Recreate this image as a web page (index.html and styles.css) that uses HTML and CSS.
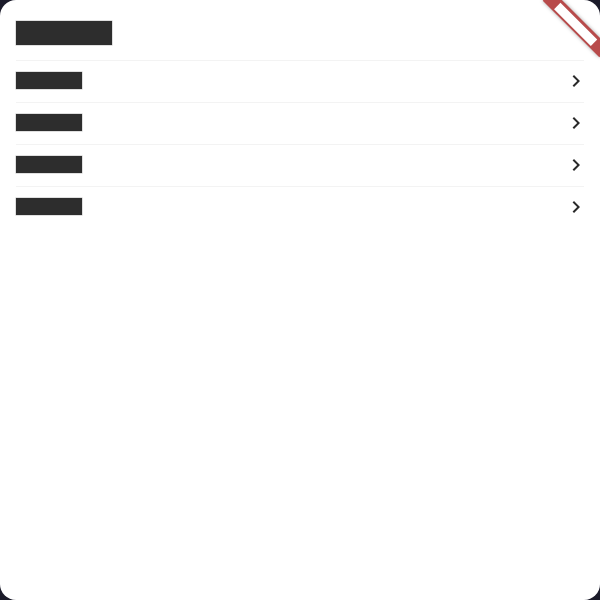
FILE: index.html
```html
<!DOCTYPE html>
<html lang="zh">
<head>
<meta charset="utf-8">
<title>设置</title>
<link rel="stylesheet" href="styles.css">
</head>
<body>
<div class="app">
  <div class="content">
    <h1 class="title"><span class="tofu tofu-title">设置中心</span></h1>
    <ul class="list">
      <li class="row"><span class="tofu tofu-row">个人信息</span><svg class="chev" viewBox="0 0 24 24" width="24" height="24"><path d="M10 6L8.59 7.41 13.17 12l-4.58 4.59L10 18l6-6z"/></svg></li>
      <li class="row"><span class="tofu tofu-row">账号安全</span><svg class="chev" viewBox="0 0 24 24" width="24" height="24"><path d="M10 6L8.59 7.41 13.17 12l-4.58 4.59L10 18l6-6z"/></svg></li>
      <li class="row"><span class="tofu tofu-row">消息通知</span><svg class="chev" viewBox="0 0 24 24" width="24" height="24"><path d="M10 6L8.59 7.41 13.17 12l-4.58 4.59L10 18l6-6z"/></svg></li>
      <li class="row"><span class="tofu tofu-row">关于我们</span><svg class="chev" viewBox="0 0 24 24" width="24" height="24"><path d="M10 6L8.59 7.41 13.17 12l-4.58 4.59L10 18l6-6z"/></svg></li>
    </ul>
  </div>
  <div class="banner"><span class="banner-text">DEBUG</span></div>
</div>
</body>
</html>
```

FILE: styles.css
```css
html, body {
  margin: 0;
  padding: 0;
}
body {
  background: #1b1b2a;
  font-family: "Noto Sans CJK SC", "Noto Sans", sans-serif;
}
.app {
  position: relative;
  width: 600px;
  height: 600px;
  background: #ffffff;
  border-radius: 16px;
  overflow: hidden;
}
.content {
  padding: 21px 16px 0;
}
.title {
  margin: 0 0 15px;
  height: 24px;
  display: flex;
  font-weight: normal;
}
.tofu {
  display: inline-flex;
  align-items: center;
  justify-content: center;
  background: #2d2d2d;
  color: #2d2d2d;
  white-space: nowrap;
  box-shadow: 0 0 0 0.5px rgba(0, 0, 0, 0.25);
}
.tofu-title {
  width: 96px;
  height: 24px;
  font-size: 20px;
  line-height: 24px;
}
.tofu-row {
  width: 66px;
  height: 17px;
  font-size: 13px;
  line-height: 17px;
  margin-top: -2px;
}
.list {
  list-style: none;
  margin: 0;
  padding: 0;
}
.row {
  height: 41px;
  border-top: 1px solid #f3f3f3;
  display: flex;
  align-items: center;
  justify-content: space-between;
}
.chev {
  fill: #2a2a2a;
  margin-right: -4px;
  margin-top: -1px;
}
.banner {
  position: absolute;
  left: 536px;
  top: 17px;
  width: 80px;
  height: 14px;
  background: #b84b4b;
  transform: rotate(45deg);
  display: flex;
  align-items: center;
  justify-content: center;
  box-shadow: 0 0 4px rgba(0, 0, 0, 0.35);
}
.banner-text {
  display: inline-flex;
  align-items: center;
  justify-content: center;
  width: 52px;
  height: 9px;
  background: #ffffff;
  color: #ffffff;
  font-family: "Liberation Sans", sans-serif;
  font-size: 7px;
  font-weight: bold;
  line-height: 9px;
}
```
